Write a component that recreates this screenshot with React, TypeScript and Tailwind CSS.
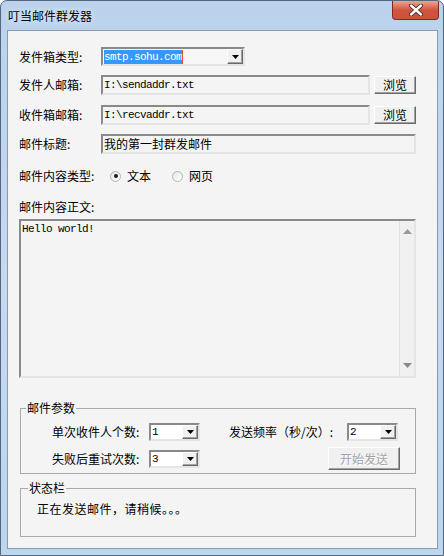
import React from "react";

const sunken =
  "border-2 border-t-[#8a8a8a] border-l-[#8a8a8a] border-b-[#e4e4e4] border-r-[#e4e4e4]";
const raised =
  "border border-t-white border-l-white border-b-[#6a6a6a] border-r-[#6a6a6a] shadow-[inset_-1px_-1px_0_#a0a0a0] bg-[#f0f0f0]";
const mono = "font-['Liberation_Mono','Noto_Sans_CJK_SC',monospace] text-[11px] tracking-[-0.6px]";

function DropArrow() {
  return (
    <div className={`w-[16px] h-full flex items-center justify-center ${raised}`}>
      <svg width="7" height="4" viewBox="0 0 7 4">
        <path d="M0 0h7L3.5 4z" fill="#000" />
      </svg>
    </div>
  );
}

function Combo({ value, width }: { value: string; width: string }) {
  return (
    <div className={`${width} h-[18px] flex items-stretch bg-white ${sunken}`}>
      <div className={`flex-1 flex items-center pl-[1px] ${mono}`}>{value}</div>
      <DropArrow />
    </div>
  );
}

function Radio({ checked, text }: { checked?: boolean; text: string }) {
  return (
    <div className="flex items-center gap-[6px]">
      <div className="w-[11px] h-[11px] rounded-full border border-[#b4b4b4] bg-gradient-to-br from-[#e6e6e6] to-white flex items-center justify-center">
        {checked && <div className="w-[4px] h-[4px] rounded-full bg-[#1a1a1a]" />}
      </div>
      <span>{text}</span>
    </div>
  );
}

function BrowseButton() {
  return (
    <button className={`ml-[4px] w-[42px] h-[18px] text-[12px] leading-[12px] ${raised}`}>
      浏览
    </button>
  );
}

export default function App() {
  return (
    <div className="w-[444px] h-[556px] flex flex-col rounded-t-[7px] border border-[#56677d] bg-gradient-to-b from-[#bad2ec] via-[#c4daf1] to-[#bcd6f0] overflow-hidden font-['Noto_Sans_CJK_SC',sans-serif] text-[12px] leading-[14px] text-black">
      {/* title bar */}
      <div className="h-[29px] flex items-start justify-between">
        <span className="pl-[7px] pt-[8px] [text-shadow:0_0_6px_#ffffff]">叮当邮件群发器</span>
        <div className="w-[47px] h-[19px] mr-[4px] rounded-b-[4px] border border-t-0 border-[#7b2c20] bg-gradient-to-b from-[#e9a592] via-[#d2543d] to-[#c9533a] flex items-center justify-center">
          <svg width="14" height="12" viewBox="0 0 14 12">
            <path d="M2 1.5l10 9M12 1.5l-10 9" stroke="#3a2a28" strokeWidth="4.2" strokeLinecap="round" />
            <path d="M2 1.5l10 9M12 1.5l-10 9" stroke="#ffffff" strokeWidth="2.4" strokeLinecap="round" />
          </svg>
        </div>
      </div>

      {/* client area */}
      <div className="ml-[6px] w-[431px] h-[519px] border border-[#8c99a8] bg-[#f4f4f4] flex flex-col pl-[11px] pt-[16px]">
        <div className="flex items-center h-[19px]">
          <span className="w-[82px]">发件箱类型:</span>
          <div className={`w-[144px] h-[19px] flex items-stretch bg-[#f7f7f7] ${sunken}`}>
            <div className="flex-1 flex items-center pl-[1px]">
              <span className={`bg-[#3399ff] text-white leading-[14px] ${mono}`}>smtp.sohu.com</span>
              <span className="w-[1px] h-[14px] bg-[#e0502a]" />
            </div>
            <DropArrow />
          </div>
        </div>

        <div className="flex items-center h-[20px] mt-[9px]">
          <span className="w-[82px]">发件人邮箱:</span>
          <div className={`w-[269px] h-[20px] flex items-center pl-[1px] ${sunken} ${mono}`}>I:\sendaddr.txt</div>
          <BrowseButton />
        </div>

        <div className="flex items-center h-[20px] mt-[10px]">
          <span className="w-[82px]">收件箱邮箱:</span>
          <div className={`w-[269px] h-[20px] flex items-center pl-[1px] ${sunken} ${mono}`}>I:\recvaddr.txt</div>
          <BrowseButton />
        </div>

        <div className="flex items-center h-[20px] mt-[9px]">
          <span className="w-[82px]">邮件标题:</span>
          <div className={`w-[315px] h-[20px] flex items-center pl-[1px] ${sunken}`}>我的第一封群发邮件</div>
        </div>

        <div className="flex items-center h-[16px] mt-[14px]">
          <span className="w-[91px]">邮件内容类型:</span>
          <Radio checked text="文本" />
          <div className="w-[21px]" />
          <Radio text="网页" />
        </div>

        <div className="flex items-center h-[16px] mt-[15px]">
          <span>邮件内容正文:</span>
        </div>

        <div className={`mt-[4px] w-[397px] h-[159px] flex ${sunken}`}>
          <div className={`flex-1 pl-[1px] pt-[1px] ${mono}`}>Hello world!</div>
          <div className="w-[15px] h-full bg-[#f0f0f0] border-l border-[#e2e2e2] flex flex-col items-center justify-between py-[8px]">
            <svg width="9" height="5" viewBox="0 0 9 5">
              <path d="M0 5h9L4.5 0z" fill="#9a9a9a" />
            </svg>
            <svg width="9" height="5" viewBox="0 0 9 5">
              <path d="M0 0h9L4.5 5z" fill="#8a8a8a" />
            </svg>
          </div>
        </div>

        {/* mail params */}
        <fieldset className="mt-[23px] ml-[1px] w-[396px] border border-[#a9a9a9]">
          <legend className="ml-[5px] px-[1px] leading-[14px]">邮件参数</legend>
          <div className="pl-[31px] pt-[7px] pb-[3px]">
            <div className="flex items-center h-[19px]">
              <span className="w-[97px]">单次收件人个数:</span>
              <Combo value="1" width="w-[51px]" />
              <span className="ml-[29px] w-[118px]">发送频率（秒/次）:</span>
              <Combo value="2" width="w-[51px]" />
            </div>
            <div className="flex items-center h-[23px] mt-[6px]">
              <span className="w-[97px]">失败后重试次数:</span>
              <Combo value="3" width="w-[51px]" />
              <button className={`ml-[128px] w-[72px] h-[23px] text-[#a3a3a3] [text-shadow:1px_1px_0_#ffffff] ${raised}`}>
                开始发送
              </button>
            </div>
          </div>
        </fieldset>

        {/* status */}
        <fieldset className="mt-[7px] ml-[1px] w-[396px] border border-[#a9a9a9]">
          <legend className="ml-[7px] px-[1px] leading-[14px]">状态栏</legend>
          <div className="pl-[16px] pt-[7px] pb-[20px] tracking-[0.5px]">正在发送邮件，请稍候。。。</div>
        </fieldset>
      </div>
    </div>
  );
}
